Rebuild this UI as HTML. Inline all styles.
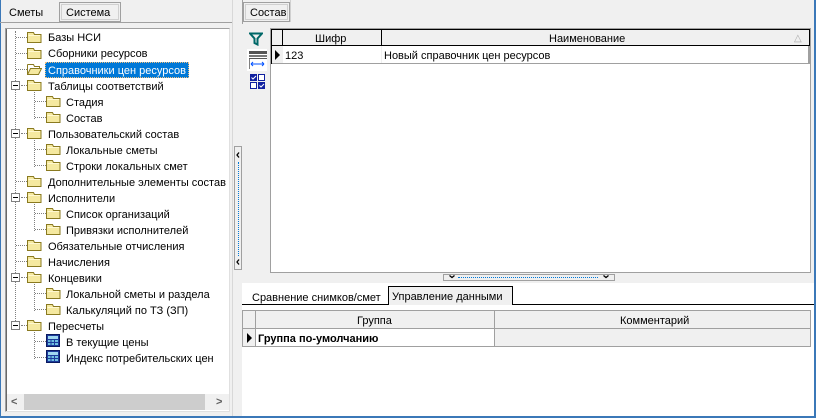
<!DOCTYPE html>
<html><head><meta charset="utf-8"><style>
*{margin:0;padding:0;box-sizing:border-box}
body{width:816px;height:418px;background:#f0f0f0;font-family:"Liberation Sans",sans-serif;font-size:11px;color:#000;position:relative;overflow:hidden}
.a{position:absolute}
.t{position:absolute;white-space:nowrap;line-height:14px;transform:translateY(1px)}
.dh{position:absolute;border-top:1px dotted #808080;height:0}
.dv{position:absolute;border-left:1px dotted #808080;width:0}
.exp{position:absolute;width:9px;height:9px;border:1px solid #808080;background:#fff}
.exp:after{content:"";position:absolute;left:1px;top:3px;width:5px;height:1px;background:#000}
</style></head><body>
<div class="a" style="left:0;top:0;width:1px;height:418px;background:#3b78b8"></div>
<div class="a" style="right:0;top:0;width:2px;height:418px;background:#3b78b8"></div>
<div class="a" style="left:0;bottom:0;width:816px;height:2px;background:#3b78b8"></div>

<div class="t" style="left:9px;top:5px">Сметы</div>
<div class="a" style="left:59px;top:2px;width:62px;height:20px;border:1px solid #a0a0a0;background:#f0f0f0"></div>
<div class="a" style="left:61px;top:4px;width:58px;height:16px;border:1px solid #d0d0d0"></div>
<div class="t" style="left:66px;top:5px">Система</div>
<div class="a" style="left:0;top:22px;width:232px;height:1px;background:#a0a0a0"></div>

<div class="a" style="left:5px;top:28px;width:225px;height:384px;background:#fff;border:1px solid #a0a0a0;border-right-color:#e0e0e0;border-bottom-color:#e0e0e0"></div>
<div class="a" style="left:6px;top:29px;width:1px;height:382px;background:#696969"></div>
<div class="a" style="left:7px;top:394px;width:222px;height:16px;background:#f0f0f0"></div>
<div class="a" style="left:24px;top:394px;width:181px;height:16px;background:#cdcdcd"></div>
<div class="t" style="left:11px;top:394px;color:#606060;font-weight:bold">&lt;</div>
<div class="t" style="left:216px;top:394px;color:#606060;font-weight:bold">&gt;</div>

<svg width="0" height="0" style="position:absolute"><defs>
<g id="fo"><path d="M0.5 2.5h6l1 2h6.5v8h-13.5z" fill="#f5e9a0" stroke="#8a7a20"/><path d="M1.5 5.5h11.5" stroke="#fff8d0"/></g>
<g id="fopen"><path d="M0.5 2.5h6l1 2h5v2" fill="none" stroke="#8a7a20"/><path d="M0.5 2.5v10h11l3-6h-11l-3 6" fill="#f5e9a0" stroke="#8a7a20"/></g>
<g id="calc"><rect x="0.5" y="0.5" width="13" height="12" fill="#1c3c9c" stroke="#0a1a60"/><rect x="2" y="2" width="10" height="3" fill="#a0d8f0"/><rect x="2" y="6" width="10" height="5" fill="#70c0e0"/><path d="M2 8.5h10M5 6v5M8.5 6v5" stroke="#1c3c9c"/></g>
</defs></svg>

<div class="dv" style="left:15px;top:31px;height:296px"></div>
<div class="dv" style="left:34px;top:92px;height:27px"></div>
<div class="dv" style="left:34px;top:140px;height:27px"></div>
<div class="dv" style="left:34px;top:204px;height:27px"></div>
<div class="dv" style="left:34px;top:284px;height:27px"></div>
<div class="dv" style="left:34px;top:332px;height:27px"></div>

<div class="dh" style="left:16px;top:37px;width:11px"></div><svg class="a" style="left:27px;top:30px" width="15" height="14"><use href="#fo"/></svg><div class="t" style="left:48px;top:30px">Базы НСИ</div>
<div class="dh" style="left:16px;top:53px;width:11px"></div><svg class="a" style="left:27px;top:46px" width="15" height="14"><use href="#fo"/></svg><div class="t" style="left:48px;top:46px">Сборники ресурсов</div>
<div class="dh" style="left:16px;top:69px;width:11px"></div><svg class="a" style="left:27px;top:62px" width="15" height="14"><use href="#fopen"/></svg><div class="a" style="left:45px;top:62px;width:144px;height:16px;background:#0078d7;border:1px dotted #f0c080"></div><div class="t" style="left:48px;top:63px;color:#fff">Справочники цен ресурсов</div>
<div class="exp" style="left:11px;top:81px"></div><div class="dh" style="left:21px;top:85px;width:6px"></div><svg class="a" style="left:27px;top:78px" width="15" height="14"><use href="#fo"/></svg><div class="t" style="left:48px;top:79px">Таблицы соответствий</div>
<div class="dh" style="left:35px;top:101px;width:11px"></div><svg class="a" style="left:46px;top:94px" width="15" height="14"><use href="#fo"/></svg><div class="t" style="left:66px;top:95px">Стадия</div>
<div class="dh" style="left:35px;top:117px;width:11px"></div><svg class="a" style="left:46px;top:110px" width="15" height="14"><use href="#fo"/></svg><div class="t" style="left:66px;top:111px">Состав</div>
<div class="exp" style="left:11px;top:129px"></div><div class="dh" style="left:21px;top:133px;width:6px"></div><svg class="a" style="left:27px;top:126px" width="15" height="14"><use href="#fo"/></svg><div class="t" style="left:48px;top:127px">Пользовательский состав</div>
<div class="dh" style="left:35px;top:149px;width:11px"></div><svg class="a" style="left:46px;top:142px" width="15" height="14"><use href="#fo"/></svg><div class="t" style="left:66px;top:143px">Локальные сметы</div>
<div class="dh" style="left:35px;top:165px;width:11px"></div><svg class="a" style="left:46px;top:158px" width="15" height="14"><use href="#fo"/></svg><div class="t" style="left:66px;top:159px">Строки локальных смет</div>
<div class="dh" style="left:16px;top:181px;width:11px"></div><svg class="a" style="left:27px;top:174px" width="15" height="14"><use href="#fo"/></svg><div class="t" style="left:48px;top:175px">Дополнительные элементы состав</div>
<div class="exp" style="left:11px;top:193px"></div><div class="dh" style="left:21px;top:197px;width:6px"></div><svg class="a" style="left:27px;top:190px" width="15" height="14"><use href="#fo"/></svg><div class="t" style="left:48px;top:191px">Исполнители</div>
<div class="dh" style="left:35px;top:213px;width:11px"></div><svg class="a" style="left:46px;top:206px" width="15" height="14"><use href="#fo"/></svg><div class="t" style="left:66px;top:207px">Список организаций</div>
<div class="dh" style="left:35px;top:229px;width:11px"></div><svg class="a" style="left:46px;top:222px" width="15" height="14"><use href="#fo"/></svg><div class="t" style="left:66px;top:223px">Привязки исполнителей</div>
<div class="dh" style="left:16px;top:245px;width:11px"></div><svg class="a" style="left:27px;top:238px" width="15" height="14"><use href="#fo"/></svg><div class="t" style="left:48px;top:239px">Обязательные отчисления</div>
<div class="dh" style="left:16px;top:261px;width:11px"></div><svg class="a" style="left:27px;top:254px" width="15" height="14"><use href="#fo"/></svg><div class="t" style="left:48px;top:255px">Начисления</div>
<div class="exp" style="left:11px;top:273px"></div><div class="dh" style="left:21px;top:277px;width:6px"></div><svg class="a" style="left:27px;top:270px" width="15" height="14"><use href="#fo"/></svg><div class="t" style="left:48px;top:271px">Концевики</div>
<div class="dh" style="left:35px;top:293px;width:11px"></div><svg class="a" style="left:46px;top:286px" width="15" height="14"><use href="#fo"/></svg><div class="t" style="left:66px;top:287px">Локальной сметы и раздела</div>
<div class="dh" style="left:35px;top:309px;width:11px"></div><svg class="a" style="left:46px;top:302px" width="15" height="14"><use href="#fo"/></svg><div class="t" style="left:66px;top:303px">Калькуляций по ТЗ (ЗП)</div>
<div class="exp" style="left:11px;top:321px"></div><div class="dh" style="left:21px;top:325px;width:6px"></div><svg class="a" style="left:27px;top:318px" width="15" height="14"><use href="#fo"/></svg><div class="t" style="left:48px;top:319px">Пересчеты</div>
<div class="dh" style="left:35px;top:341px;width:11px"></div><svg class="a" style="left:46px;top:334px" width="15" height="14"><use href="#calc"/></svg><div class="t" style="left:66px;top:335px">В текущие цены</div>
<div class="dh" style="left:35px;top:357px;width:11px"></div><svg class="a" style="left:46px;top:350px" width="15" height="14"><use href="#calc"/></svg><div class="t" style="left:66px;top:351px">Индекс потребительских цен</div>

<div class="a" style="left:232px;top:0;width:1px;height:416px;background:#d8d8d8"></div>
<div class="a" style="left:242px;top:0;width:1px;height:24px;background:#a0a0a0"></div>
<div class="a" style="left:234px;top:146px;width:8px;height:124px;border:1px solid #a0a0a0"></div>
<div class="dv" style="left:238px;top:162px;height:94px;border-left-color:#0078d7"></div>
<svg class="a" style="left:236px;top:152px" width="4" height="6"><path d="M3 0.5l-2 2.5l2 2.5" stroke="#000" fill="none" stroke-width="1.3"/></svg>
<svg class="a" style="left:236px;top:259px" width="4" height="6"><path d="M3 0.5l-2 2.5l2 2.5" stroke="#000" fill="none" stroke-width="1.3"/></svg>

<div class="a" style="left:243px;top:2px;width:47px;height:20px;border:1px solid #a0a0a0"></div>
<div class="a" style="left:245px;top:4px;width:43px;height:16px;border:1px solid #d0d0d0"></div>
<div class="t" style="left:250px;top:5px">Состав</div>
<div class="a" style="left:290px;top:0;width:1px;height:22px;background:#d0d0d0"></div>

<svg class="a" style="left:249px;top:32px" width="14" height="14"><path d="M1 1.5h12l-4.5 5v6l-3-1.5v-4.5z" fill="none" stroke="#006868" stroke-width="2"/></svg>
<div class="a" style="left:247px;top:49px;width:20px;height:22px;background:#fff"></div>
<svg class="a" style="left:249px;top:51px" width="18" height="18"><rect x="0" y="0" width="18" height="3" fill="#555"/><rect x="0" y="4" width="18" height="2" fill="#777"/><rect x="0" y="7" width="18" height="1" fill="#555"/><path d="M0 8v10" stroke="#000"/><path d="M2 13h13M2 13l2-2M2 13l2 2M15 13l-2-2M15 13l-2 2" stroke="#0050ff" fill="none"/></svg>
<svg class="a" style="left:250px;top:74px" width="16" height="16"><rect x="0.5" y="0.5" width="6" height="6" fill="#1020a0" stroke="#1020a0"/><rect x="8.5" y="0.5" width="6" height="6" fill="#fff" stroke="#1020a0"/><rect x="0.5" y="8.5" width="6" height="6" fill="#fff" stroke="#1020a0"/><rect x="8.5" y="8.5" width="6" height="6" fill="#1020a0" stroke="#1020a0"/><path d="M1.5 3.5l1.5 1.5 3-3M9.5 11.5l1.5 1.5 3-3" stroke="#fff" fill="none"/></svg>

<div class="a" style="left:270px;top:28px;width:541px;height:245px;background:#fff;border:1px solid #a0a0a0"></div>
<div class="a" style="left:271px;top:29px;width:539px;height:17px;background:#f0f0f0;border:1px solid #000"></div>
<div class="a" style="left:282px;top:29px;width:1px;height:35px;background:#000"></div>
<div class="a" style="left:381px;top:29px;width:1px;height:35px;background:#000"></div>
<div class="a" style="left:271px;top:46px;width:539px;height:18px;background:#f0f0f0;border-bottom:1px solid #a0a0a0"></div>
<div class="a" style="left:283px;top:46px;width:98px;height:17px;background:#fff"></div>
<div class="a" style="left:382px;top:46px;width:426px;height:17px;background:#fff"></div>
<div class="a" style="left:808px;top:46px;width:2px;height:18px;background:#a0a0a0"></div>
<div class="a" style="left:271px;top:46px;width:1px;height:18px;background:#000"></div>
<div class="t" style="left:315px;top:31px">Шифр</div>
<div class="t" style="left:549px;top:31px">Наименование</div>
<div class="t" style="left:794px;top:31px;color:#aaa;font-size:10px">△</div>
<svg class="a" style="left:275px;top:50px" width="6" height="10"><path d="M0 0l5 5l-5 5z" fill="#000"/></svg>
<div class="t" style="left:285px;top:48px">123</div>
<div class="t" style="left:384px;top:48px">Новый справочник цен ресурсов</div>

<div class="a" style="left:443px;top:274px;width:172px;height:7px;border:1px solid #a0a0a0"></div>
<div class="dh" style="left:458px;top:277px;width:140px;border-top-color:#0078d7"></div>
<svg class="a" style="left:449px;top:275px" width="6" height="4"><path d="M0.5 0.5l2.5 2l2.5-2" stroke="#000" fill="none" stroke-width="1.3"/></svg>
<svg class="a" style="left:603px;top:275px" width="6" height="4"><path d="M0.5 0.5l2.5 2l2.5-2" stroke="#000" fill="none" stroke-width="1.3"/></svg>

<div class="a" style="left:242px;top:283px;width:572px;height:133px;background:#fff"></div>
<div class="a" style="left:242px;top:304px;width:572px;height:1px;background:#000"></div>
<div class="t" style="left:252px;top:290px">Сравнение снимков/смет</div>
<div class="a" style="left:388px;top:286px;width:125px;height:19px;background:#f0f0f0;border:1px solid #000;border-bottom:none"></div>
<div class="t" style="left:392px;top:289px">Управление данными</div>

<div class="a" style="left:242px;top:310px;width:569px;height:37px;border:1px solid #a0a0a0;background:#f0f0f0"></div>
<div class="a" style="left:243px;top:328px;width:567px;height:1px;background:#a0a0a0"></div>
<div class="a" style="left:255px;top:311px;width:1px;height:36px;background:#a0a0a0"></div>
<div class="a" style="left:494px;top:311px;width:1px;height:36px;background:#a0a0a0"></div>
<div class="a" style="left:256px;top:329px;width:238px;height:17px;background:#fff"></div>
<div class="t" style="left:357px;top:313px">Группа</div>
<div class="t" style="left:620px;top:313px">Комментарий</div>
<svg class="a" style="left:247px;top:333px" width="6" height="10"><path d="M0 0l5 5l-5 5z" fill="#000"/></svg>
<div class="t" style="left:258px;top:331px;font-weight:bold">Группа по-умолчанию</div>
</body></html>
